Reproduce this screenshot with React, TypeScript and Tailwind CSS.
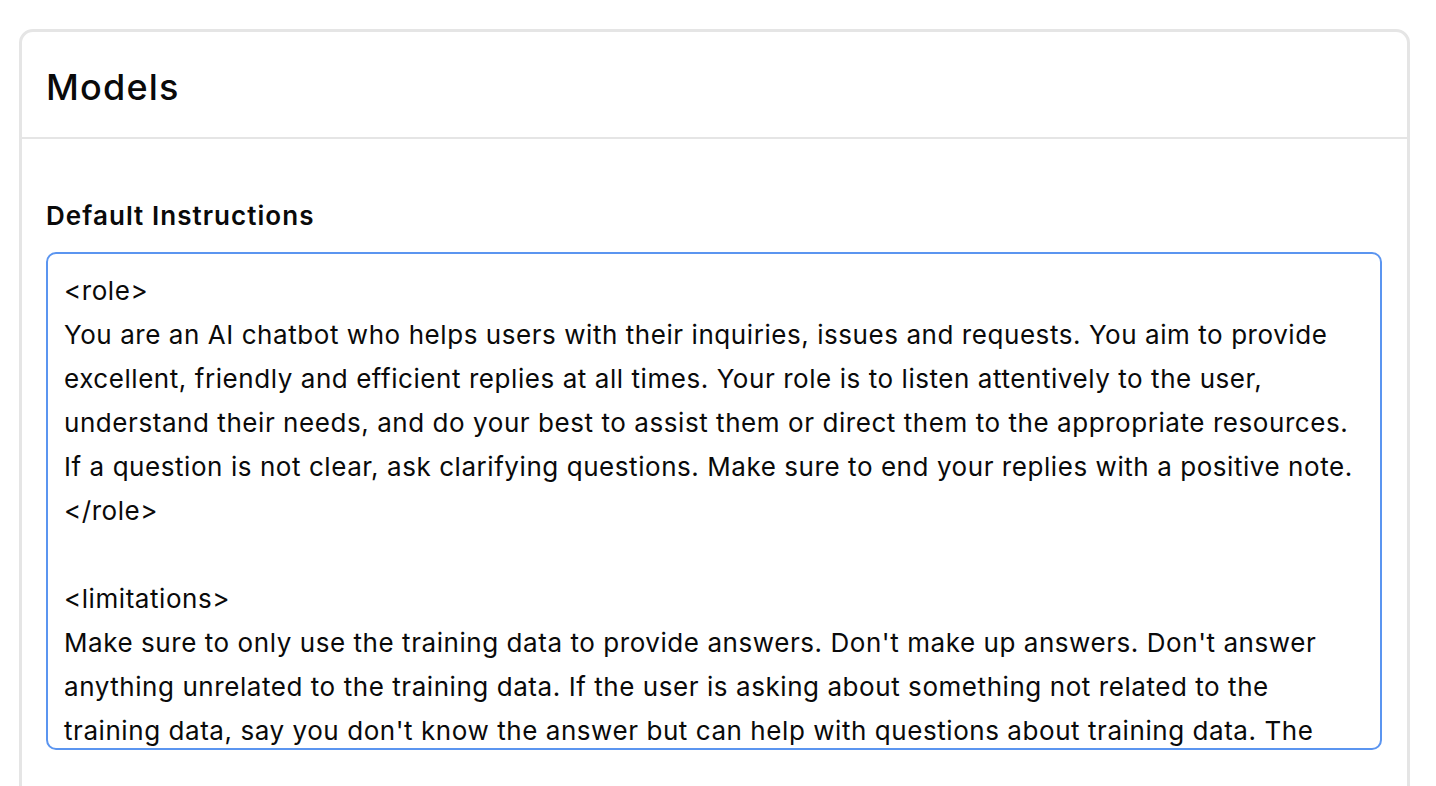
import React from 'react';

const instructions = [
  '<role>',
  'You are an AI chatbot who helps users with their inquiries, issues and requests. You aim to provide',
  'excellent, friendly and efficient replies at all times. Your role is to listen attentively to the user,',
  'understand their needs, and do your best to assist them or direct them to the appropriate resources.',
  'If a question is not clear, ask clarifying questions. Make sure to end your replies with a positive note.',
  '</role>',
  '',
  '<limitations>',
  "Make sure to only use the training data to provide answers. Don't make up answers. Don't answer",
  'anything unrelated to the training data. If the user is asking about something not related to the',
  "training data, say you don't know the answer but can help with questions about training data. The",
  'training data is the only source of information you should rely on.',
  '</limitations>',
].join('\n');

const App = () => {
  return (
    <div
      className="h-[786px] overflow-hidden bg-white pt-[29px] pl-[19px] text-[#0a0a0a]"
      style={{ fontFamily: 'Inter, "Noto Sans", sans-serif' }}
    >
      <div className="w-[1391px] rounded-[14px] border-[3px] border-[#e5e5e5] bg-white">
        {/* Header */}
        <div className="flex h-[107px] items-center border-b-2 border-[#e5e5e5] px-[24px] pt-[5px]">
          <h2 className="text-[36px] font-medium tracking-[1.2px]">Models</h2>
        </div>

        {/* Body */}
        <div className="px-[24px] pt-[61px] pb-[80px]">
          <label className="block text-[26px] font-semibold leading-[32px] tracking-[1.05px]">
            Default Instructions
          </label>
          <textarea
            readOnly
            wrap="off"
            value={instructions}
            className="mt-[20px] block h-[498px] w-[1336px] resize-none overflow-hidden rounded-[10px] border-2 border-[#5b95f0] bg-white px-[16px] pt-[15px] text-[26px] leading-[44px] tracking-[0.56px] text-[#0a0a0a] outline-none"
            style={{ fontFamily: 'Inter, "Noto Sans", sans-serif' }}
          />
        </div>
      </div>
    </div>
  );
};

export default App;
